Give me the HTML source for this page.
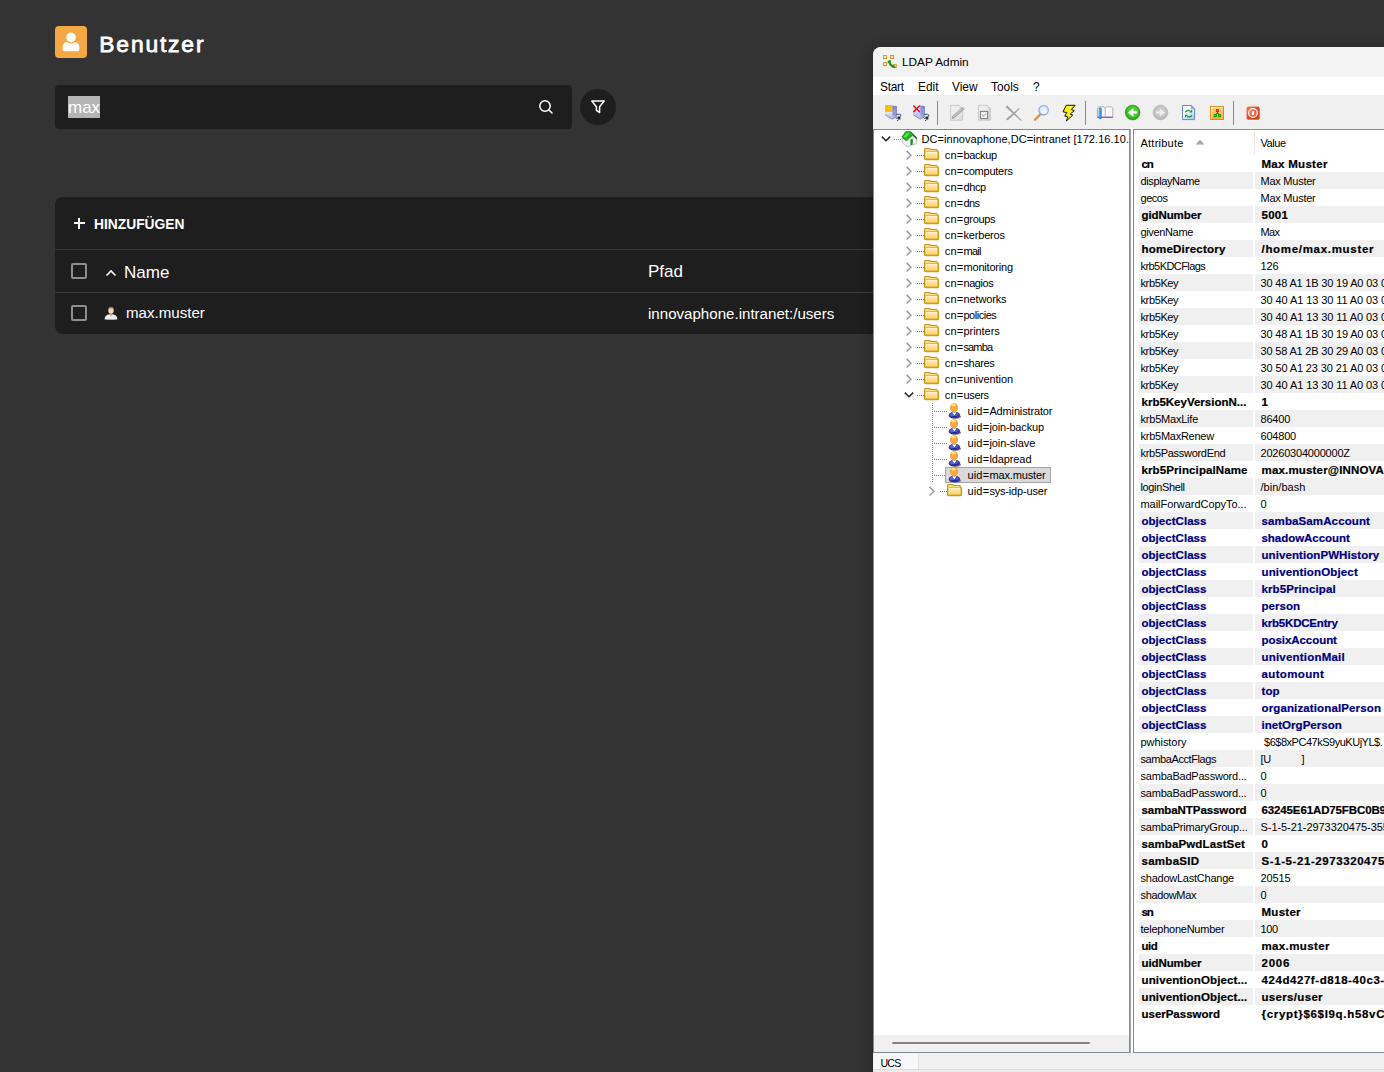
<!DOCTYPE html>
<html><head><meta charset="utf-8"><title>Benutzer</title>
<style>
html,body{margin:0;padding:0;}
body{width:1384px;height:1072px;overflow:hidden;background:#333333;position:relative;font-family:"Liberation Sans",sans-serif;}
.abs{position:absolute;}
#app{position:absolute;left:0;top:0;width:1384px;height:1072px;color:#fff;}
.appicon{position:absolute;left:55px;top:26px;width:32px;height:32px;border-radius:4px;background:#f5a842;}
.apptitle{position:absolute;left:99.3px;top:27.5px;font-size:22.8px;line-height:32px;font-weight:normal;-webkit-text-stroke:0.8px #fff;letter-spacing:1.85px;white-space:nowrap;}
.search{position:absolute;left:55px;top:85px;width:517px;height:44px;border-radius:4px;background:#1e1e1e;}
.search .sel{position:absolute;left:13px;top:11px;height:22px;line-height:24px;font-size:17px;background:#b4b4b4;color:#fff;padding:0;}
.search .sicon{position:absolute;left:483px;top:14px;}
.filterbtn{position:absolute;left:580px;top:89px;width:36px;height:36px;border-radius:18px;background:#1e1e1e;}
.filterbtn svg{position:absolute;left:10px;top:10px;}
.panel{position:absolute;left:55px;top:197px;width:1000px;height:137px;border-radius:8px;background:#1e1e1e;}
.addbtn{position:absolute;left:0;top:0;}
.plus{position:absolute;left:19px;top:25.4px;width:10.6px;height:1.8px;background:#f4f4f4;}
.plusv{position:absolute;left:23.4px;top:21px;width:1.8px;height:10.6px;background:#f4f4f4;}
.addtxt{position:absolute;left:39px;top:17.7px;font-size:13.8px;line-height:20px;font-weight:bold;white-space:nowrap;}
.hline{position:absolute;left:0;width:1000px;height:1px;background:#3a3a3a;}
.cb{position:absolute;left:16px;width:12px;height:12px;border:2px solid #8e8e8a;border-radius:2px;}
.caret{position:absolute;}
.hname{position:absolute;left:69px;top:65px;font-size:17px;line-height:22px;white-space:nowrap;}
.hpfad{position:absolute;left:593px;top:64px;font-size:17px;line-height:22px;white-space:nowrap;}
.uicon{position:absolute;left:49px;top:109px;}
.rname{position:absolute;left:71px;top:105px;font-size:15.1px;line-height:22px;white-space:nowrap;}
.rpfad{position:absolute;left:593px;top:106px;font-size:15.1px;line-height:22px;white-space:nowrap;}

#win{position:absolute;left:873px;top:47px;width:600px;height:1100px;background:#f0f0f0;border-top-left-radius:8px;box-shadow:0 2px 12px 1px rgba(0,0,0,0.3);color:#000;overflow:hidden;}
.titlebar{position:absolute;left:0;top:0;width:600px;height:30px;background:#f3f3f3;}
.ticon{position:absolute;left:9px;top:7px;}
.ttext{position:absolute;left:29px;top:7px;font-size:11.8px;line-height:16px;white-space:nowrap;}
.menubar{position:absolute;left:0;top:30px;width:600px;height:18px;background:#fff;}
.menubar span{position:absolute;top:3px;font-size:11.9px;line-height:15px;white-space:nowrap;}
.toolbar{position:absolute;left:0;top:48px;width:600px;height:34px;background:#f0f0f0;}
.tb{position:absolute;top:10px;overflow:visible;}
.tsep{position:absolute;top:6px;width:1px;height:24px;background:#8a8a8a;}
.tree{position:absolute;left:0px;top:82px;width:255px;height:922px;background:#fff;border:1px solid #868b98;border-right:1px solid #868b98;box-shadow:1px 0 0 #a2a6b0;overflow:hidden;}
.split{position:absolute;left:258px;top:81px;width:2px;height:925px;background:#fff;}
.tt{position:absolute;font-size:11px;line-height:16px;white-space:nowrap;color:#000;}
.pc{display:inline-block;width:18.7px;letter-spacing:0.15px;}
.pu{display:inline-block;width:21.9px;letter-spacing:0.15px;}
.hd{position:absolute;height:1px;background-image:linear-gradient(to right,#858585 50%,transparent 50%);background-size:2px 1px;}
.vd{position:absolute;width:1px;background-image:linear-gradient(to bottom,#858585 50%,transparent 50%);background-size:1px 2px;}
.selbox{position:absolute;width:106px;height:16px;background:#d9d9d9;border:1px solid #a6a6a6;box-sizing:border-box;}
.hscroll{position:absolute;left:0;bottom:0;width:255px;height:17px;background:#f0f0f0;}
.thumb{position:absolute;left:18px;top:7px;width:198px;height:2px;background:#828282;border-radius:1px;}
.list{position:absolute;left:260px;top:82px;width:400px;height:922px;background:#fff;border:1px solid #868b98;overflow:hidden;}
.lh{position:absolute;left:0;top:0;width:400px;height:24px;font-size:11px;}
.la{position:absolute;left:6.5px;top:6px;line-height:14px;}
.lv{position:absolute;left:126.5px;top:6px;line-height:14px;}
.sort{position:absolute;left:61px;top:9px;}
.lsep{position:absolute;left:120px;top:1px;width:1px;height:24px;background:#e5e5e5;}
.r{position:absolute;left:0;width:400px;height:17px;font-size:11px;line-height:19px;white-space:nowrap;}
.r .ca{position:absolute;left:5px;top:0;width:114px;height:17px;padding-left:1.5px;box-sizing:border-box;overflow:hidden;letter-spacing:-0.3px;}
.r .cv{position:absolute;left:121px;top:0;width:280px;height:17px;padding-left:5.5px;box-sizing:border-box;overflow:hidden;letter-spacing:-0.2px;}
.r.s .ca,.r.s .cv{background:#f0f0f0;}
.r.b{font-weight:bold;font-size:11.5px;-webkit-text-stroke:0.22px currentColor;}
.r.b .ca{letter-spacing:0.5px;padding-left:2.5px;}
.r.b .cv{letter-spacing:0.5px;padding-left:6.5px;}
.r.n{color:#000080;}
.status{position:absolute;left:0;top:1006px;width:600px;height:19px;font-size:11px;}
.status .pan{position:absolute;left:1px;top:1px;width:44px;height:15px;background:#f8f8f8;border-right:1px solid #e2e2e2;}
.status .bl{position:absolute;left:0;top:16px;width:600px;height:1px;background:#dcdcdc;}
.status .low{position:absolute;left:0;top:17px;width:600px;height:3px;background:#ececec;}
.status span{position:absolute;left:7.4px;top:3px;line-height:14px;font-size:10.6px;letter-spacing:-0.75px;}
.ssep{display:none;}

</style></head>
<body>
<svg width="0" height="0" style="position:absolute">
<defs>
<linearGradient id="gfold" x1="0" y1="0" x2="0" y2="1"><stop offset="0" stop-color="#feeeb4"/><stop offset="1" stop-color="#fad36a"/></linearGradient>
<g id="i-folder"><path d="M0.5,2.6 C0.5,1.8 1,1.5 1.8,1.5 H5.4 C6.2,1.5 6.4,2.5 7.2,2.5 H12.2 C13,2.5 13.4,3 13.4,3.8 V4.4 H13.6 C14.3,4.4 14.6,4.8 14.6,5.4 V11.4 C14.6,12.2 14.2,12.6 13.4,12.6 H1.7 C0.9,12.6 0.5,12.2 0.5,11.4 Z" fill="#f8dc80" stroke="#c8941a" stroke-width="1.1"/><path d="M1.9,4.6 H13.2 C13.6,4.6 13.8,4.8 13.8,5.2 V11.2 C13.8,11.6 13.6,11.8 13.2,11.8 H1.9 C1.5,11.8 1.3,11.6 1.3,11.2 V5.2 C1.3,4.8 1.5,4.6 1.9,4.6Z" fill="url(#gfold)" stroke="#d9a820" stroke-width="0.7"/><path d="M2.2,5.5 H13 M2.2,5.5 V11.2" stroke="#fffbe6" stroke-width="0.7" fill="none"/></g>
<g id="i-home"><path d="M2.3,7.5 L2.3,11.8 L7,15.8 L16.6,12.6 L16.6,7 L12.4,3.2 Z" fill="#f4f4f4" stroke="#a8a8a8" stroke-width="0.7"/><path d="M7,10 V15.6" stroke="#d8d8d8" stroke-width="0.6"/><path d="M10.4,8.6 L12.8,7.8 V13.4 L10.4,14.2 Z" fill="#14961a"/><path d="M12.6,2.2 L17,6.8 L17,8.6 L12.2,4.4 Z" fill="#0c7a10"/><path d="M5.8,0.6 C6.4,0.2 7,0.2 7.6,0.8 L8.4,0.4 C9.2,0 10.4,0.2 11,0.8 L12.8,2.6 C13.2,3.2 13,3.8 12.4,4.4 L7.2,9.2 C6.6,9.6 6,9.6 5.4,9.2 L2.6,7 C2,6.4 2,5.6 2.4,5 Z" fill="#22b422" stroke="#0e8a12" stroke-width="0.6"/><path d="M4,5.6 L7,2 L9.6,2.6 L5.6,6.8Z" fill="#7af26a" opacity="0.8"/></g>
<g id="i-user"><ellipse cx="7.4" cy="13.6" rx="5.8" ry="2.4" fill="#8a8a8a"/><path d="M0.8,12.6 C0.8,10 3.4,8.8 6.4,8.8 C9.4,8.8 12,10 12,12.6 C12,14.4 9.5,15.2 6.4,15.2 C3.3,15.2 0.8,14.4 0.8,12.6Z" fill="#2a2e9c"/><path d="M1.6,12 C2.2,10.2 3.6,9.6 5,9.5 L6.3,12.6 C4.6,13.6 2.6,13.4 1.6,12Z" fill="#5a66d4"/><path d="M11.2,12 C10.6,10.2 9.2,9.6 7.8,9.5 L6.5,12.6 C8.2,13.6 10.2,13.4 11.2,12Z" fill="#4450c0"/><path d="M4.3,9.2 L6.4,12.8 L8.5,9.2Z" fill="#fff"/><ellipse cx="6" cy="4.8" rx="3.9" ry="4.5" fill="#f59a18"/><ellipse cx="5.8" cy="5.6" rx="3" ry="3.2" fill="#fbaa38"/><ellipse cx="5.6" cy="2.2" rx="2.2" ry="1.4" fill="#ffe680"/></g>
<g id="i-app"><rect x="0.6" y="0.7" width="5" height="5" fill="#fff8ec" opacity="0.6"/><rect x="1.6" y="1.6" width="2.9" height="2.9" fill="#fff" stroke="#dc9432" stroke-width="1.1"/><rect x="8.6" y="1.6" width="2.9" height="2.9" fill="#fff" stroke="#dc9432" stroke-width="1.1"/><rect x="1.6" y="8.7" width="2.9" height="2.9" fill="#fff" stroke="#dc9432" stroke-width="1.1"/><rect x="11.4" y="10.6" width="2.9" height="2.9" fill="#fff" stroke="#dc9432" stroke-width="1.1"/><path d="M7.4,7.4 C7.6,10 9.6,12.4 12.2,12.7" fill="none" stroke="#1c9a1c" stroke-width="2.5" stroke-linecap="round"/><path d="M4.9,8.3 L8.3,5.6 L9,9.8 Z" fill="#1c9a1c"/></g>
<g id="i-conn"><path d="M7.2,0.4 L11.4,1.1 L12,1.8 L12,11.4 L7.2,14.2 Z" fill="url(#gtowR)"/><path d="M0.2,7 L7.2,7 L7.2,14.2 L0.2,9.9 Z" fill="url(#gtowL)"/><path d="M0.2,9.8 L7.2,14.2 L12,11.4" stroke="#8c8ca0" stroke-width="0.9" fill="none"/><path d="M8.6,4.5 L10.8,4.9 M8.6,6.5 L10.8,6.9" stroke="#a8aae6" stroke-width="0.8"/><rect x="10.2" y="10.2" width="1" height="1" fill="#58c058"/><path d="M11.2,9.3 H14.6 Q15.7,9.3 15.7,10.4 V11.6" stroke="#34485a" stroke-width="1" fill="none"/><path d="M12.4,11.6 H15.4 V14.6 H13.4 L12.4,13.4 Z" fill="#16303c"/><rect x="12.2" y="15" width="1" height="1" fill="#16303c"/><path d="M10.6,12.6 L12.2,13.8" stroke="#34485a" stroke-width="0.9"/><rect x="0" y="0" width="7.2" height="7.1" fill="#fcc400"/><path d="M1.2,1.2h1.2v1.2h-1.2z M4.6,1.2h1.2v1.2h-1.2z M1.2,4.6h1.2v1.2h-1.2z M4.6,4.6h1.2v1.2h-1.2z" fill="#e0a400"/></g>
<g id="i-disc"><path d="M7.2,0.4 L11.4,1.1 L12,1.8 L12,11.4 L7.2,14.2 Z" fill="url(#gtowR)"/><path d="M0.2,1 L7.2,0.4 L7.2,14.2 L0.2,9.9 Z" fill="url(#gtowL)"/><path d="M0.2,9.8 L7.2,14.2 L12,11.4" stroke="#8c8ca0" stroke-width="0.9" fill="none"/><path d="M8.6,4.5 L10.8,4.9 M8.6,6.5 L10.8,6.9" stroke="#a8aae6" stroke-width="0.8"/><rect x="10.2" y="10.2" width="1" height="1" fill="#58c058"/><path d="M11.2,9.3 H14.6 Q15.7,9.3 15.7,10.4 V11.6" stroke="#34485a" stroke-width="1" fill="none"/><path d="M12.4,11.6 H15.4 V14.6 H13.4 L12.4,13.4 Z" fill="#16303c"/><rect x="12.2" y="15" width="1" height="1" fill="#16303c"/><path d="M10.6,12.6 L12.2,13.8" stroke="#34485a" stroke-width="0.9"/><path d="M0.3,0.6 L6.9,7 M6.9,0.6 L0.3,7" stroke="#f00000" stroke-width="1.35"/></g>
<g id="i-edit"><path d="M0.5,0.4 H9.4 L12.6,3.6 V15.2 H0.5 Z" fill="url(#gpage)" stroke="#c6c6c6" stroke-width="0.9"/><path d="M9.4,0.4 V3.6 H12.6 Z" fill="#d4d4d4"/><path d="M12.6,2.4 L14.2,3.9 L4.4,12.8 L2,13.6 L2.6,11.2 Z" fill="#b2b2b2" stroke="#9a9a9a" stroke-width="0.7"/><path d="M12.2,3.6 L3.2,12" stroke="#d8d8d8" stroke-width="0.6"/></g>
<g id="i-save"><path d="M0.5,0.4 H9.4 L12.6,3.6 V15.2 H0.5 Z" fill="url(#gpage)" stroke="#c6c6c6" stroke-width="0.9"/><path d="M9.4,0.4 V3.6 H12.6 Z" fill="#d0d0d0"/><path d="M10.4,3.6 H12.2 V14.8 H10.4Z" fill="#d2d2d2"/><rect x="2.4" y="6.4" width="7.2" height="7.2" fill="#f2f2f2" stroke="#828282" stroke-width="1.1"/><path d="M3.8,9.6 L5.4,11.2 L8.2,8.4" stroke="#bcbcbc" stroke-width="1.1" fill="none"/></g>
<g id="i-del"><path d="M-0.5,1.9 L1.1,0.3 L15.7,15.2 L15.0,15.9 Z" fill="#a2a2a2"/><path d="M13.1,3.0 L13.8,3.7 L2.2,15.0 L0.5,15.3 L0.5,13.6 Z" fill="#a2a2a2"/></g>
<g id="i-find"><path d="M6.2,9.4 L1,14.8" stroke="#e8901c" stroke-width="2.3" stroke-linecap="round"/><path d="M6.6,9.8 L1.6,15" stroke="#b8a0c0" stroke-width="0.6"/><circle cx="9.6" cy="5.2" r="4.7" fill="url(#gglass)" stroke="#98a4de" stroke-width="1.2"/></g>
<g id="i-bolt"><path d="M4.2,0.3 H13.2 L9.3,4.5 L12.3,5.7 L8.2,9.1 L10.8,10.1 L4.4,16 L5.8,11.8 L2.8,11.2 L4.8,7.6 L1,6.8 Z" fill="#f8f000" stroke="#000" stroke-width="0.9" stroke-linejoin="miter"/><path d="M5.8,2 L9.6,2 L6.6,5.2 M5,8.8 L7.6,6.8 M6.2,10.2 L8,10.6" stroke="#fff" stroke-width="0.7" opacity="0.85" fill="none"/></g>
<g id="i-book"><path d="M0.4,3.6 C0.4,2.4 1.6,1.8 3.2,1.8 H6 C7.4,1.8 8.2,2.6 8.2,3.6 C8.2,2.6 9,1.8 10.4,1.8 H13.2 C14.8,1.8 15.8,2.4 15.8,3.6 V12 H0.4 Z" fill="#fbfbfb" stroke="#a6a6ae" stroke-width="0.9"/><path d="M8.2,3.6 V11.8" stroke="#b4b4bc" stroke-width="0.9"/><path d="M0.2,12.4 H16" stroke="#b44cd0" stroke-width="1.3"/><rect x="2" y="2.8" width="2.4" height="11" rx="1.1" fill="#2c8cf4" stroke="#1a5cc0" stroke-width="0.5"/><path d="M2.9,3.6 V12.6" stroke="#8cc8ff" stroke-width="0.7"/></g>
<linearGradient id="gtowR" x1="0" y1="0" x2="0" y2="1"><stop offset="0" stop-color="#7c7cd8"/><stop offset="0.6" stop-color="#9494dc"/><stop offset="1" stop-color="#c0c0ec"/></linearGradient>
<linearGradient id="gtowL" x1="0" y1="0" x2="0" y2="1"><stop offset="0" stop-color="#eceefa"/><stop offset="0.5" stop-color="#c8cbee"/><stop offset="1" stop-color="#b4b6e2"/></linearGradient>
<linearGradient id="gpage" x1="0" y1="0" x2="1" y2="1"><stop offset="0" stop-color="#f0f0f0"/><stop offset="0.6" stop-color="#ebebeb"/><stop offset="1" stop-color="#d6d6d6"/></linearGradient>
<linearGradient id="gbpage" x1="0" y1="0" x2="0.6" y2="1"><stop offset="0" stop-color="#ffffff"/><stop offset="0.55" stop-color="#f2f8ff"/><stop offset="1" stop-color="#a8d0f8"/></linearGradient>
<radialGradient id="gglass" cx="0.6" cy="0.65" r="0.7"><stop offset="0" stop-color="#ffffff"/><stop offset="1" stop-color="#b8e0fa"/></radialGradient>
<linearGradient id="gorange" x1="0" y1="0" x2="0" y2="1"><stop offset="0" stop-color="#ffd090"/><stop offset="1" stop-color="#ffac38"/></linearGradient>
<radialGradient id="ggreen" cx="0.5" cy="0.45" r="0.55"><stop offset="0" stop-color="#78e050"/><stop offset="0.6" stop-color="#4cc830"/><stop offset="1" stop-color="#169a10"/></radialGradient>
<radialGradient id="ggray" cx="0.5" cy="0.45" r="0.55"><stop offset="0" stop-color="#d2d2d2"/><stop offset="0.6" stop-color="#c6c6c6"/><stop offset="1" stop-color="#b4b4b4"/></radialGradient>
<g id="i-back"><circle cx="7.6" cy="7.5" r="7.4" fill="url(#ggreen)" stroke="#20a416" stroke-width="0.7"/><path d="M3,7.4 L8.4,3.2 V6.2 H12.2 V8.6 H8.4 V11.8 Z" fill="#fff"/></g>
<g id="i-fwd"><circle cx="8.5" cy="7.5" r="7.4" fill="url(#ggray)" stroke="#bcbcbc" stroke-width="0.7"/><path d="M13.2,7.4 L7.8,3.2 V6.2 H4 V8.6 H7.8 V11.8 Z" fill="#ececec"/></g>
<g id="i-refresh"><path d="M0.5,0.5 H9.4 L12.6,3.8 V14.6 H0.5 Z" fill="url(#gbpage)" stroke="#7484cc" stroke-width="1"/><path d="M9.4,0.5 V3.8 H12.6 Z" fill="#8ab8f4" stroke="#7484cc" stroke-width="0.6"/><path d="M3.4,7.4 C4,5.6 6.4,4.8 8.2,6" fill="none" stroke="#109818" stroke-width="1.25"/><path d="M7.2,7.6 L10.2,7.6 L10.2,4.6 Z" fill="#109818"/><path d="M9.8,10 C9.2,11.8 6.8,12.6 5,11.4" fill="none" stroke="#109818" stroke-width="1.25"/><path d="M6,9.8 L3,9.8 L3,12.8 Z" fill="#109818"/></g>
<g id="i-schema"><rect x="0.5" y="1.5" width="13" height="13" fill="url(#gorange)" stroke="#d88c20" stroke-width="1"/><path d="M1.4,14 V2.4 H13" stroke="#fff6e4" stroke-width="0.8" fill="none"/><rect x="6" y="4" width="3" height="3" fill="#f02010"/><rect x="7" y="4.8" width="1" height="1" fill="#ff9a40"/><path d="M7.5,7 V8.4 M5.4,9.6 L7.5,8 L9.6,9.6" stroke="#0c8a10" stroke-width="1.1" fill="none"/><rect x="3.8" y="9.2" width="3.1" height="3" fill="#0c9a10"/><rect x="8" y="9.2" width="3.1" height="3" fill="#0c9a10"/><rect x="4.8" y="10.2" width="1" height="1" fill="#6ee060"/><rect x="9" y="10.2" width="1" height="1" fill="#6ee060"/></g>
<linearGradient id="gred" x1="0" y1="0" x2="1" y2="1"><stop offset="0" stop-color="#f47858"/><stop offset="0.5" stop-color="#e84820"/><stop offset="1" stop-color="#e03808"/></linearGradient>
<g id="i-power"><rect x="0" y="1" width="14.2" height="14.2" rx="2" fill="#fbfbfb"/><rect x="0.5" y="1.5" width="13.2" height="13.2" rx="1.6" fill="url(#gred)"/><circle cx="7" cy="8" r="4.3" fill="#f08468" fill-opacity="0.55" stroke="#fff" stroke-width="1.25"/><rect x="5.9" y="6" width="2.2" height="4" rx="0.4" fill="#fff"/></g>
</defs>
</svg>

<div id="app">
  <div class="appicon"><svg width="32" height="32" viewBox="0 0 32 32"><path d="M7.6,21.5 C7.6,17.4 10.6,15.2 16,15.2 C21.4,15.2 24.4,17.4 24.4,21.5 V23.3 C24.4,24.6 23.6,25.3 22.4,25.3 H9.6 C8.4,25.3 7.6,24.6 7.6,23.3 Z" fill="#fff"/><circle cx="16" cy="11.4" r="6" fill="#f5a842"/><circle cx="16" cy="11.4" r="4.8" fill="#fff"/></svg></div>
  <div class="apptitle">Benutzer</div>
  <div class="search"><span class="sel">max</span>
    <svg class="sicon" width="16" height="16" viewBox="0 0 16 16"><circle cx="7" cy="7" r="5.2" fill="none" stroke="#fff" stroke-width="1.5"/><path d="M11 11 L14 14" stroke="#fff" stroke-width="1.5" stroke-linecap="round"/></svg>
  </div>
  <div class="filterbtn"><svg width="16" height="16" viewBox="0 0 16 16"><path d="M1.8,2 H14.2 L9.6,7.8 V13.6 L6.4,11.4 V7.8 Z" fill="none" stroke="#fff" stroke-width="1.5" stroke-linejoin="round"/></svg></div>
  <div class="panel">
    <div class="addbtn"><span class="plus"></span><span class="plusv"></span><span class="addtxt">HINZUFÜGEN</span></div>
    <div class="hline" style="top:52px"></div>
    <div class="hline" style="top:95px"></div>
    <div class="cb" style="top:66px"></div>
    <svg class="caret" width="12" height="8" viewBox="0 0 12 8" style="top:72px;left:50px"><path d="M1.5 6.5 L6 2 L10.5 6.5" fill="none" stroke="#fff" stroke-width="1.6"/></svg>
    <div class="hname">Name</div>
    <div class="hpfad">Pfad</div>
    <div class="cb" style="top:108px"></div>
    <svg class="uicon" width="14" height="14" viewBox="0 0 14 14"><path d="M0.6,13.2 C0.6,10.2 2.6,8.6 5.4,8.2 H8.6 C11.4,8.6 13.4,10.2 13.4,13.2 C13.4,13.8 0.6,13.8 0.6,13.2Z" fill="#ececec"/><path d="M1,13.4 H13 V14 H1Z" fill="#9a9a9a" opacity="0.6"/><path d="M5.6,8 L7,10.8 L8.4,8 Z" fill="#b0a090"/><ellipse cx="7" cy="4.6" rx="2.7" ry="3.3" fill="#f0d8c0"/><path d="M4.2,4 C4.2,1.6 5.4,0.8 7,0.8 C8.6,0.8 9.8,1.6 9.8,4 C9.2,2.8 8.4,2.4 7,2.4 C5.6,2.4 4.8,2.8 4.2,4Z" fill="#a07850"/></svg>
    <div class="rname">max.muster</div>
    <div class="rpfad">innovaphone.intranet:/users</div>
  </div>
</div>
<div id="win">
<div class="titlebar"><svg class="ticon" width="17" height="16" viewBox="0 0 17 16"><use href="#i-app"/></svg><span class="ttext">LDAP Admin</span></div>
<div class="menubar"><span style="left:7px;letter-spacing:-0.25px">Start</span><span style="left:45px">Edit</span><span style="left:79px">View</span><span style="left:118px">Tools</span><span style="left:160px">?</span></div>
<div class="toolbar"><svg class="tb" style="left:12.0px" width="17" height="17" viewBox="0 0 17 17"><use href="#i-conn"/></svg><svg class="tb" style="left:40.0px" width="17" height="17" viewBox="0 0 17 17"><use href="#i-disc"/></svg><div class="tsep" style="left:64px"></div><svg class="tb" style="left:77.0px" width="17" height="17" viewBox="0 0 17 17"><use href="#i-edit"/></svg><svg class="tb" style="left:105.0px" width="17" height="17" viewBox="0 0 17 17"><use href="#i-save"/></svg><svg class="tb" style="left:132.5px" width="17" height="17" viewBox="0 0 17 17"><use href="#i-del"/></svg><svg class="tb" style="left:160.5px" width="17" height="17" viewBox="0 0 17 17"><use href="#i-find"/></svg><svg class="tb" style="left:189.0px" width="17" height="17" viewBox="0 0 17 17"><use href="#i-bolt"/></svg><div class="tsep" style="left:212px"></div><svg class="tb" style="left:224.3px" width="17" height="17" viewBox="0 0 17 17"><use href="#i-book"/></svg><svg class="tb" style="left:252.0px" width="17" height="17" viewBox="0 0 17 17"><use href="#i-back"/></svg><svg class="tb" style="left:279.3px" width="17" height="17" viewBox="0 0 17 17"><use href="#i-fwd"/></svg><svg class="tb" style="left:309.0px" width="17" height="17" viewBox="0 0 17 17"><use href="#i-refresh"/></svg><svg class="tb" style="left:337.0px" width="17" height="17" viewBox="0 0 17 17"><use href="#i-schema"/></svg><div class="tsep" style="left:360px"></div><svg class="tb" style="left:373.0px" width="17" height="17" viewBox="0 0 17 17"><use href="#i-power"/></svg></div>
<div class="split"></div><div class="tree">
<svg class="abs" style="left:5.6px;top:5.0px" width="12" height="8" viewBox="0 0 12 8"><path d="M1.8 1.6 L6 5.8 L10.2 1.6" fill="none" stroke="#262626" stroke-width="1.5"/></svg><div class="hd" style="left:20px;top:9px;width:8px"></div><svg class="abs" style="left:26.0px;top:1.0px" width="18" height="16" viewBox="0 0 18 16"><use href="#i-home"/></svg><div class="tt" style="left:47.5px;top:1.0px;letter-spacing:0.055px">DC=innovaphone,DC=intranet [172.16.10.</div><svg class="abs" style="left:31.0px;top:19.0px" width="8" height="12" viewBox="0 0 8 12"><path d="M1.6 1.9 L5.9 6.2 L1.6 10.5" fill="none" stroke="#9c9c9c" stroke-width="1.5"/></svg><div class="hd" style="left:43px;top:25px;width:7px"></div><svg class="abs" style="left:50.0px;top:17.0px" width="16" height="14" viewBox="0 0 16 14"><use href="#i-folder"/></svg><div class="tt" style="left:70.8px;top:17.0px"><span class="pc">cn=</span><span style="letter-spacing:-0.371px">backup</span></div><svg class="abs" style="left:31.0px;top:35.0px" width="8" height="12" viewBox="0 0 8 12"><path d="M1.6 1.9 L5.9 6.2 L1.6 10.5" fill="none" stroke="#9c9c9c" stroke-width="1.5"/></svg><div class="hd" style="left:43px;top:41px;width:7px"></div><svg class="abs" style="left:50.0px;top:33.0px" width="16" height="14" viewBox="0 0 16 14"><use href="#i-folder"/></svg><div class="tt" style="left:70.8px;top:33.0px"><span class="pc">cn=</span><span style="letter-spacing:-0.244px">computers</span></div><svg class="abs" style="left:31.0px;top:51.0px" width="8" height="12" viewBox="0 0 8 12"><path d="M1.6 1.9 L5.9 6.2 L1.6 10.5" fill="none" stroke="#9c9c9c" stroke-width="1.5"/></svg><div class="hd" style="left:43px;top:57px;width:7px"></div><svg class="abs" style="left:50.0px;top:49.0px" width="16" height="14" viewBox="0 0 16 14"><use href="#i-folder"/></svg><div class="tt" style="left:70.8px;top:49.0px"><span class="pc">cn=</span><span style="letter-spacing:-0.378px">dhcp</span></div><svg class="abs" style="left:31.0px;top:67.0px" width="8" height="12" viewBox="0 0 8 12"><path d="M1.6 1.9 L5.9 6.2 L1.6 10.5" fill="none" stroke="#9c9c9c" stroke-width="1.5"/></svg><div class="hd" style="left:43px;top:73px;width:7px"></div><svg class="abs" style="left:50.0px;top:65.0px" width="16" height="14" viewBox="0 0 16 14"><use href="#i-folder"/></svg><div class="tt" style="left:70.8px;top:65.0px"><span class="pc">cn=</span><span style="letter-spacing:-0.618px">dns</span></div><svg class="abs" style="left:31.0px;top:83.0px" width="8" height="12" viewBox="0 0 8 12"><path d="M1.6 1.9 L5.9 6.2 L1.6 10.5" fill="none" stroke="#9c9c9c" stroke-width="1.5"/></svg><div class="hd" style="left:43px;top:89px;width:7px"></div><svg class="abs" style="left:50.0px;top:81.0px" width="16" height="14" viewBox="0 0 16 14"><use href="#i-folder"/></svg><div class="tt" style="left:70.8px;top:81.0px"><span class="pc">cn=</span><span style="letter-spacing:-0.307px">groups</span></div><svg class="abs" style="left:31.0px;top:99.0px" width="8" height="12" viewBox="0 0 8 12"><path d="M1.6 1.9 L5.9 6.2 L1.6 10.5" fill="none" stroke="#9c9c9c" stroke-width="1.5"/></svg><div class="hd" style="left:43px;top:105px;width:7px"></div><svg class="abs" style="left:50.0px;top:97.0px" width="16" height="14" viewBox="0 0 16 14"><use href="#i-folder"/></svg><div class="tt" style="left:70.8px;top:97.0px"><span class="pc">cn=</span><span style="letter-spacing:-0.185px">kerberos</span></div><svg class="abs" style="left:31.0px;top:115.0px" width="8" height="12" viewBox="0 0 8 12"><path d="M1.6 1.9 L5.9 6.2 L1.6 10.5" fill="none" stroke="#9c9c9c" stroke-width="1.5"/></svg><div class="hd" style="left:43px;top:121px;width:7px"></div><svg class="abs" style="left:50.0px;top:113.0px" width="16" height="14" viewBox="0 0 16 14"><use href="#i-folder"/></svg><div class="tt" style="left:70.8px;top:113.0px"><span class="pc">cn=</span><span style="letter-spacing:-0.742px">mail</span></div><svg class="abs" style="left:31.0px;top:131.0px" width="8" height="12" viewBox="0 0 8 12"><path d="M1.6 1.9 L5.9 6.2 L1.6 10.5" fill="none" stroke="#9c9c9c" stroke-width="1.5"/></svg><div class="hd" style="left:43px;top:137px;width:7px"></div><svg class="abs" style="left:50.0px;top:129.0px" width="16" height="14" viewBox="0 0 16 14"><use href="#i-folder"/></svg><div class="tt" style="left:70.8px;top:129.0px"><span class="pc">cn=</span><span style="letter-spacing:-0.193px">monitoring</span></div><svg class="abs" style="left:31.0px;top:147.0px" width="8" height="12" viewBox="0 0 8 12"><path d="M1.6 1.9 L5.9 6.2 L1.6 10.5" fill="none" stroke="#9c9c9c" stroke-width="1.5"/></svg><div class="hd" style="left:43px;top:153px;width:7px"></div><svg class="abs" style="left:50.0px;top:145.0px" width="16" height="14" viewBox="0 0 16 14"><use href="#i-folder"/></svg><div class="tt" style="left:70.8px;top:145.0px"><span class="pc">cn=</span><span style="letter-spacing:-0.443px">nagios</span></div><svg class="abs" style="left:31.0px;top:163.0px" width="8" height="12" viewBox="0 0 8 12"><path d="M1.6 1.9 L5.9 6.2 L1.6 10.5" fill="none" stroke="#9c9c9c" stroke-width="1.5"/></svg><div class="hd" style="left:43px;top:169px;width:7px"></div><svg class="abs" style="left:50.0px;top:161.0px" width="16" height="14" viewBox="0 0 16 14"><use href="#i-folder"/></svg><div class="tt" style="left:70.8px;top:161.0px"><span class="pc">cn=</span><span style="letter-spacing:-0.131px">networks</span></div><svg class="abs" style="left:31.0px;top:179.0px" width="8" height="12" viewBox="0 0 8 12"><path d="M1.6 1.9 L5.9 6.2 L1.6 10.5" fill="none" stroke="#9c9c9c" stroke-width="1.5"/></svg><div class="hd" style="left:43px;top:185px;width:7px"></div><svg class="abs" style="left:50.0px;top:177.0px" width="16" height="14" viewBox="0 0 16 14"><use href="#i-folder"/></svg><div class="tt" style="left:70.8px;top:177.0px"><span class="pc">cn=</span><span style="letter-spacing:-0.484px">policies</span></div><svg class="abs" style="left:31.0px;top:195.0px" width="8" height="12" viewBox="0 0 8 12"><path d="M1.6 1.9 L5.9 6.2 L1.6 10.5" fill="none" stroke="#9c9c9c" stroke-width="1.5"/></svg><div class="hd" style="left:43px;top:201px;width:7px"></div><svg class="abs" style="left:50.0px;top:193.0px" width="16" height="14" viewBox="0 0 16 14"><use href="#i-folder"/></svg><div class="tt" style="left:70.8px;top:193.0px"><span class="pc">cn=</span><span style="letter-spacing:-0.054px">printers</span></div><svg class="abs" style="left:31.0px;top:211.0px" width="8" height="12" viewBox="0 0 8 12"><path d="M1.6 1.9 L5.9 6.2 L1.6 10.5" fill="none" stroke="#9c9c9c" stroke-width="1.5"/></svg><div class="hd" style="left:43px;top:217px;width:7px"></div><svg class="abs" style="left:50.0px;top:209.0px" width="16" height="14" viewBox="0 0 16 14"><use href="#i-folder"/></svg><div class="tt" style="left:70.8px;top:209.0px"><span class="pc">cn=</span><span style="letter-spacing:-0.875px">samba</span></div><svg class="abs" style="left:31.0px;top:227.0px" width="8" height="12" viewBox="0 0 8 12"><path d="M1.6 1.9 L5.9 6.2 L1.6 10.5" fill="none" stroke="#9c9c9c" stroke-width="1.5"/></svg><div class="hd" style="left:43px;top:233px;width:7px"></div><svg class="abs" style="left:50.0px;top:225.0px" width="16" height="14" viewBox="0 0 16 14"><use href="#i-folder"/></svg><div class="tt" style="left:70.8px;top:225.0px"><span class="pc">cn=</span><span style="letter-spacing:-0.363px">shares</span></div><svg class="abs" style="left:31.0px;top:243.0px" width="8" height="12" viewBox="0 0 8 12"><path d="M1.6 1.9 L5.9 6.2 L1.6 10.5" fill="none" stroke="#9c9c9c" stroke-width="1.5"/></svg><div class="hd" style="left:43px;top:249px;width:7px"></div><svg class="abs" style="left:50.0px;top:241.0px" width="16" height="14" viewBox="0 0 16 14"><use href="#i-folder"/></svg><div class="tt" style="left:70.8px;top:241.0px"><span class="pc">cn=</span><span style="letter-spacing:-0.059px">univention</span></div><svg class="abs" style="left:29.0px;top:261.0px" width="12" height="8" viewBox="0 0 12 8"><path d="M1.8 1.6 L6 5.8 L10.2 1.6" fill="none" stroke="#262626" stroke-width="1.5"/></svg><div class="hd" style="left:43px;top:265px;width:7px"></div><svg class="abs" style="left:50.0px;top:257.0px" width="16" height="14" viewBox="0 0 16 14"><use href="#i-folder"/></svg><div class="tt" style="left:70.8px;top:257.0px"><span class="pc">cn=</span><span style="letter-spacing:-0.350px">users</span></div><div class="vd" style="left:58px;top:273px;height:80px"></div><div class="hd" style="left:60px;top:281px;width:13px"></div><svg class="abs" style="left:74.2px;top:273.0px" width="14" height="16" viewBox="0 0 14 16"><use href="#i-user"/></svg><div class="tt" style="left:93.5px;top:273.0px"><span class="pu">uid=</span><span style="letter-spacing:-0.144px">Administrator</span></div><div class="hd" style="left:60px;top:297px;width:13px"></div><svg class="abs" style="left:74.2px;top:289.0px" width="14" height="16" viewBox="0 0 14 16"><use href="#i-user"/></svg><div class="tt" style="left:93.5px;top:289.0px"><span class="pu">uid=</span><span style="letter-spacing:-0.154px">join-backup</span></div><div class="hd" style="left:60px;top:313px;width:13px"></div><svg class="abs" style="left:74.2px;top:305.0px" width="14" height="16" viewBox="0 0 14 16"><use href="#i-user"/></svg><div class="tt" style="left:93.5px;top:305.0px"><span class="pu">uid=</span><span style="letter-spacing:-0.061px">join-slave</span></div><div class="hd" style="left:60px;top:329px;width:13px"></div><svg class="abs" style="left:74.2px;top:321.0px" width="14" height="16" viewBox="0 0 14 16"><use href="#i-user"/></svg><div class="tt" style="left:93.5px;top:321.0px"><span class="pu">uid=</span><span style="letter-spacing:-0.099px">ldapread</span></div><div class="hd" style="left:60px;top:345px;width:13px"></div><div class="selbox" style="left:71px;top:337px"></div><svg class="abs" style="left:74.2px;top:337.0px" width="14" height="16" viewBox="0 0 14 16"><use href="#i-user"/></svg><div class="tt" style="left:93.5px;top:337.0px"><span class="pu">uid=</span><span style="letter-spacing:-0.144px">max.muster</span></div><svg class="abs" style="left:54.0px;top:355.0px" width="8" height="12" viewBox="0 0 8 12"><path d="M1.6 1.9 L5.9 6.2 L1.6 10.5" fill="none" stroke="#9c9c9c" stroke-width="1.5"/></svg><div class="hd" style="left:66px;top:361px;width:7px"></div><svg class="abs" style="left:73.0px;top:353.0px" width="16" height="14" viewBox="0 0 16 14"><use href="#i-folder"/></svg><div class="tt" style="left:93.5px;top:353.0px"><span class="pu">uid=</span><span style="letter-spacing:-0.176px">sys-idp-user</span></div><div class="hscroll"><div class="thumb"></div></div></div>
<div class="list">
<div class="lh"><span class="la" style="letter-spacing:0.232px">Attribute</span><svg class="sort" width="10" height="6" viewBox="0 0 10 6"><path d="M0.5 5.5 L5 0.8 L9.5 5.5 Z" fill="#a9a9a9"/></svg><div class="lsep"></div><span class="lv" style="letter-spacing:-0.425px">Value</span></div>
<div class="r b" style="top:25px"><div class="ca" style="letter-spacing:-1.196px">cn</div><div class="cv" style="letter-spacing:0.290px">Max Muster</div></div>
<div class="r s" style="top:42px"><div class="ca" style="letter-spacing:-0.387px">displayName</div><div class="cv" style="letter-spacing:-0.244px">Max Muster</div></div>
<div class="r" style="top:59px"><div class="ca" style="letter-spacing:-0.463px">gecos</div><div class="cv" style="letter-spacing:-0.244px">Max Muster</div></div>
<div class="r s b" style="top:76px"><div class="ca" style="letter-spacing:-0.090px">gidNumber</div><div class="cv" style="letter-spacing:0.271px">5001</div></div>
<div class="r" style="top:93px"><div class="ca" style="letter-spacing:-0.353px">givenName</div><div class="cv" style="letter-spacing:-0.690px">Max</div></div>
<div class="r s b" style="top:110px"><div class="ca" style="letter-spacing:0.219px">homeDirectory</div><div class="cv" style="letter-spacing:0.690px">/home/max.muster</div></div>
<div class="r" style="top:127px"><div class="ca" style="letter-spacing:-0.566px">krb5KDCFlags</div><div class="cv" style="letter-spacing:-0.118px">126</div></div>
<div class="r s" style="top:144px"><div class="ca" style="letter-spacing:-0.376px">krb5Key</div><div class="cv" style="letter-spacing:-0.183px">30 48 A1 1B 30 19 A0 03 02 01</div></div>
<div class="r" style="top:161px"><div class="ca" style="letter-spacing:-0.376px">krb5Key</div><div class="cv" style="letter-spacing:-0.090px">30 40 A1 13 30 11 A0 03 02 01</div></div>
<div class="r s" style="top:178px"><div class="ca" style="letter-spacing:-0.376px">krb5Key</div><div class="cv" style="letter-spacing:-0.090px">30 40 A1 13 30 11 A0 03 02 01</div></div>
<div class="r" style="top:195px"><div class="ca" style="letter-spacing:-0.376px">krb5Key</div><div class="cv" style="letter-spacing:-0.183px">30 48 A1 1B 30 19 A0 03 02 01</div></div>
<div class="r s" style="top:212px"><div class="ca" style="letter-spacing:-0.376px">krb5Key</div><div class="cv" style="letter-spacing:-0.183px">30 58 A1 2B 30 29 A0 03 02 01</div></div>
<div class="r" style="top:229px"><div class="ca" style="letter-spacing:-0.376px">krb5Key</div><div class="cv" style="letter-spacing:-0.127px">30 50 A1 23 30 21 A0 03 02 01</div></div>
<div class="r s" style="top:246px"><div class="ca" style="letter-spacing:-0.376px">krb5Key</div><div class="cv" style="letter-spacing:-0.090px">30 40 A1 13 30 11 A0 03 02 01</div></div>
<div class="r b" style="top:263px"><div class="ca" style="letter-spacing:0.004px">krb5KeyVersionN...</div><div class="cv">1</div></div>
<div class="r s" style="top:280px"><div class="ca" style="letter-spacing:-0.210px">krb5MaxLife</div><div class="cv" style="letter-spacing:-0.193px">86400</div></div>
<div class="r" style="top:297px"><div class="ca" style="letter-spacing:-0.252px">krb5MaxRenew</div><div class="cv" style="letter-spacing:-0.198px">604800</div></div>
<div class="r s" style="top:314px"><div class="ca" style="letter-spacing:-0.296px">krb5PasswordEnd</div><div class="cv" style="letter-spacing:-0.203px">20260304000000Z</div></div>
<div class="r b" style="top:331px"><div class="ca" style="letter-spacing:0.113px">krb5PrincipalName</div><div class="cv" style="letter-spacing:0.172px">max.muster@INNOVAPHONE.INTRANET</div></div>
<div class="r s" style="top:348px"><div class="ca" style="letter-spacing:-0.362px">loginShell</div><div class="cv" style="letter-spacing:0.022px">/bin/bash</div></div>
<div class="r" style="top:365px"><div class="ca" style="letter-spacing:-0.043px">mailForwardCopyTo...</div><div class="cv">0</div></div>
<div class="r s b n" style="top:382px"><div class="ca" style="letter-spacing:0.034px">objectClass</div><div class="cv" style="letter-spacing:0.121px">sambaSamAccount</div></div>
<div class="r b n" style="top:399px"><div class="ca" style="letter-spacing:0.034px">objectClass</div><div class="cv" style="letter-spacing:-0.040px">shadowAccount</div></div>
<div class="r s b n" style="top:416px"><div class="ca" style="letter-spacing:0.034px">objectClass</div><div class="cv" style="letter-spacing:0.079px">univentionPWHistory</div></div>
<div class="r b n" style="top:433px"><div class="ca" style="letter-spacing:0.034px">objectClass</div><div class="cv" style="letter-spacing:0.154px">univentionObject</div></div>
<div class="r s b n" style="top:450px"><div class="ca" style="letter-spacing:0.034px">objectClass</div><div class="cv" style="letter-spacing:0.103px">krb5Principal</div></div>
<div class="r b n" style="top:467px"><div class="ca" style="letter-spacing:0.034px">objectClass</div><div class="cv" style="letter-spacing:0.037px">person</div></div>
<div class="r s b n" style="top:484px"><div class="ca" style="letter-spacing:0.034px">objectClass</div><div class="cv" style="letter-spacing:-0.191px">krb5KDCEntry</div></div>
<div class="r b n" style="top:501px"><div class="ca" style="letter-spacing:0.034px">objectClass</div><div class="cv" style="letter-spacing:-0.055px">posixAccount</div></div>
<div class="r s b n" style="top:518px"><div class="ca" style="letter-spacing:0.034px">objectClass</div><div class="cv" style="letter-spacing:0.200px">univentionMail</div></div>
<div class="r b n" style="top:535px"><div class="ca" style="letter-spacing:0.034px">objectClass</div><div class="cv" style="letter-spacing:0.366px">automount</div></div>
<div class="r s b n" style="top:552px"><div class="ca" style="letter-spacing:0.034px">objectClass</div><div class="cv" style="letter-spacing:0.123px">top</div></div>
<div class="r b n" style="top:569px"><div class="ca" style="letter-spacing:0.034px">objectClass</div><div class="cv" style="letter-spacing:0.131px">organizationalPerson</div></div>
<div class="r s b n" style="top:586px"><div class="ca" style="letter-spacing:0.034px">objectClass</div><div class="cv" style="letter-spacing:0.037px">inetOrgPerson</div></div>
<div class="r" style="top:603px"><div class="ca" style="letter-spacing:-0.057px">pwhistory</div><div class="cv" style="letter-spacing:-0.481px;padding-left:9px">$6$8xPC47kS9yuKUjYL$.</div></div>
<div class="r s" style="top:620px"><div class="ca" style="letter-spacing:-0.408px">sambaAcctFlags</div><div class="cv" style="letter-spacing:-0.3px">[U<span style="display:inline-block;width:30.6px"></span>]</div></div>
<div class="r" style="top:637px"><div class="ca" style="letter-spacing:-0.217px">sambaBadPassword...</div><div class="cv">0</div></div>
<div class="r s" style="top:654px"><div class="ca" style="letter-spacing:-0.217px">sambaBadPassword...</div><div class="cv">0</div></div>
<div class="r b" style="top:671px"><div class="ca" style="letter-spacing:-0.069px">sambaNTPassword</div><div class="cv" style="letter-spacing:-0.123px">63245E61AD75FBC0B9A1</div></div>
<div class="r s" style="top:688px"><div class="ca" style="letter-spacing:-0.178px">sambaPrimaryGroup...</div><div class="cv" style="letter-spacing:-0.058px">S-1-5-21-2973320475-3551</div></div>
<div class="r b" style="top:705px"><div class="ca" style="letter-spacing:0.115px">sambaPwdLastSet</div><div class="cv">0</div></div>
<div class="r s b" style="top:722px"><div class="ca" style="letter-spacing:0.285px">sambaSID</div><div class="cv" style="letter-spacing:0.580px">S-1-5-21-2973320475-3</div></div>
<div class="r" style="top:739px"><div class="ca" style="letter-spacing:-0.241px">shadowLastChange</div><div class="cv" style="letter-spacing:-0.143px">20515</div></div>
<div class="r s" style="top:756px"><div class="ca" style="letter-spacing:-0.349px">shadowMax</div><div class="cv">0</div></div>
<div class="r b" style="top:773px"><div class="ca" style="letter-spacing:-1.196px">sn</div><div class="cv" style="letter-spacing:0.275px">Muster</div></div>
<div class="r s" style="top:790px"><div class="ca" style="letter-spacing:-0.242px">telephoneNumber</div><div class="cv" style="letter-spacing:-0.318px">100</div></div>
<div class="r b" style="top:807px"><div class="ca" style="letter-spacing:-0.460px">uid</div><div class="cv" style="letter-spacing:0.369px">max.muster</div></div>
<div class="r s b" style="top:824px"><div class="ca" style="letter-spacing:-0.090px">uidNumber</div><div class="cv" style="letter-spacing:0.738px">2006</div></div>
<div class="r b" style="top:841px"><div class="ca" style="letter-spacing:0.127px">univentionObject...</div><div class="cv" style="letter-spacing:0.565px">424d427f-d818-40c3-a</div></div>
<div class="r s b" style="top:858px"><div class="ca" style="letter-spacing:0.127px">univentionObject...</div><div class="cv" style="letter-spacing:0.322px">users/user</div></div>
<div class="r b" style="top:875px"><div class="ca" style="letter-spacing:-0.018px">userPassword</div><div class="cv" style="letter-spacing:0.689px">{crypt}$6$I9q.h58vCe</div></div>
</div>
<div class="status"><div class="pan"></div><div class="bl"></div><div class="low"></div><span>UCS</span></div>
</div>
</body></html>
